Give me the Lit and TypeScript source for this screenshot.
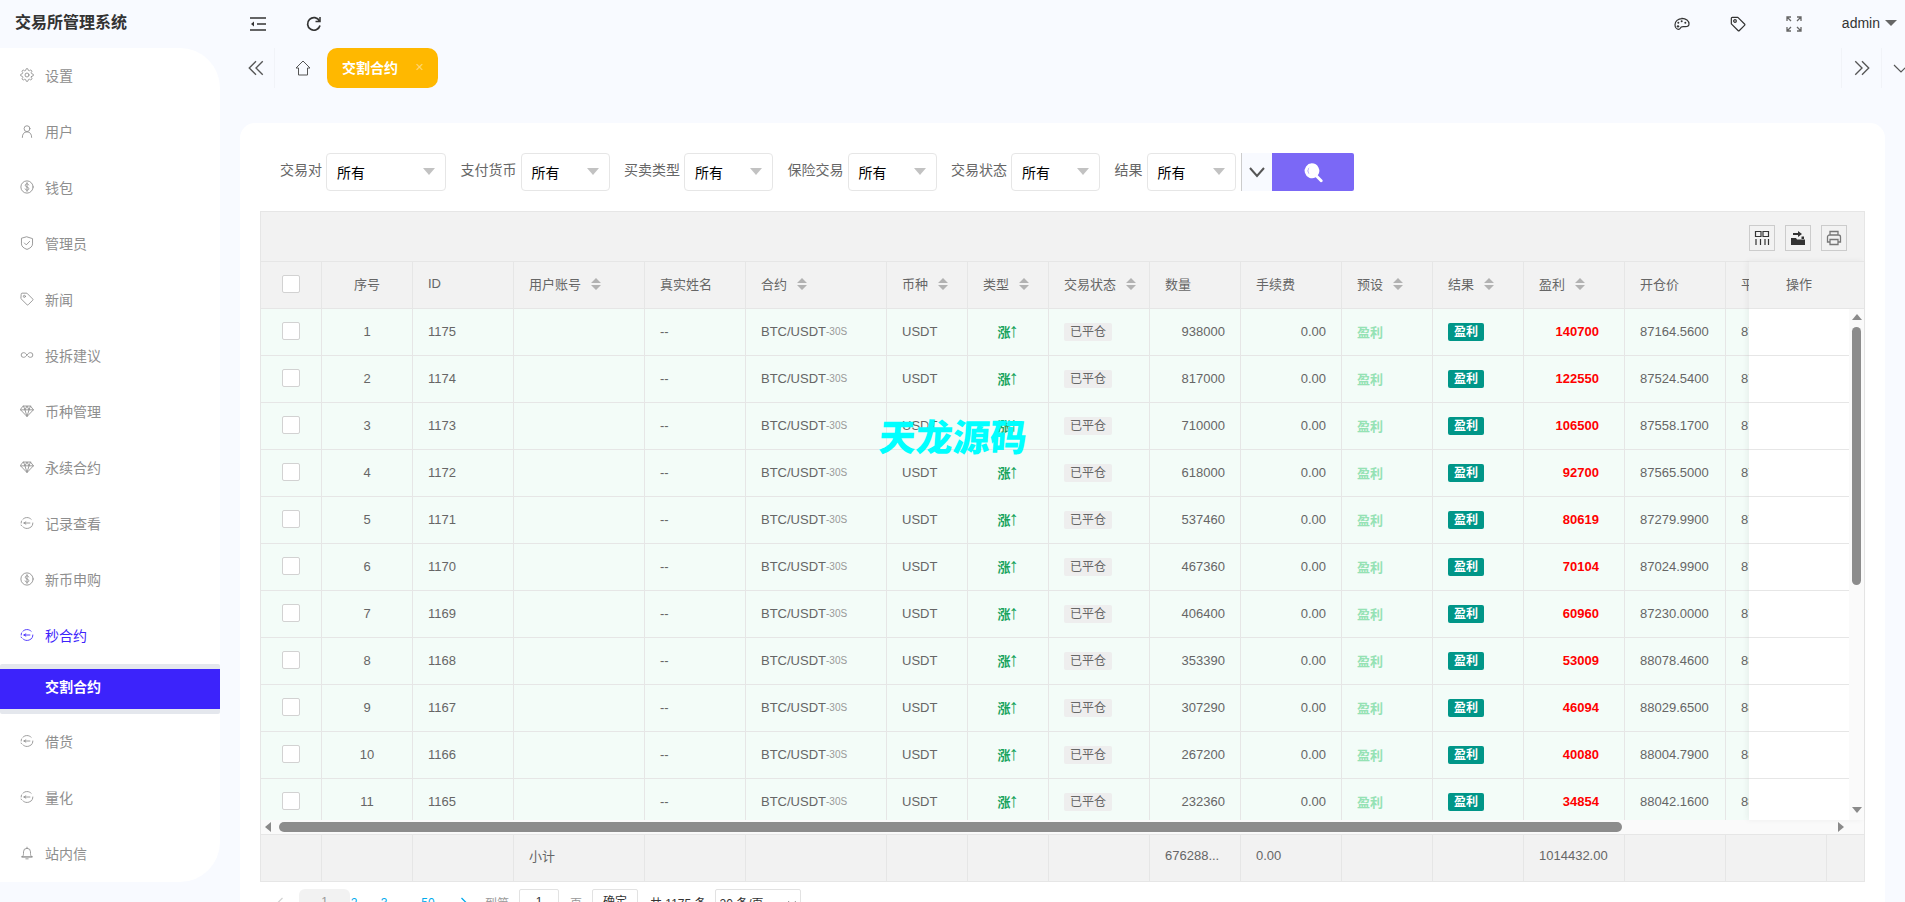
import { LitElement, html, css, svg } from "lit";
import { customElement } from "lit/decorators.js";

const ic = (body: unknown, cls = "ic") =>
  html`<svg class=${cls} viewBox="0 0 24 24" fill="none" stroke="currentColor" stroke-width="1.6" stroke-linecap="round" stroke-linejoin="round">${body}</svg>`;

const gear = svg`<circle cx="12" cy="12" r="3.4"/><path d="M19.4 15a1.65 1.65 0 0 0 .33 1.82l.06.06a2 2 0 0 1 0 2.83 2 2 0 0 1-2.83 0l-.06-.06a1.65 1.65 0 0 0-1.82-.33 1.65 1.65 0 0 0-1 1.51V21a2 2 0 0 1-2 2 2 2 0 0 1-2-2v-.09A1.65 1.65 0 0 0 9 19.4a1.65 1.65 0 0 0-1.82.33l-.06.06a2 2 0 0 1-2.83 0 2 2 0 0 1 0-2.83l.06-.06a1.65 1.65 0 0 0 .33-1.82 1.65 1.65 0 0 0-1.51-1H3a2 2 0 0 1-2-2 2 2 0 0 1 2-2h.09A1.65 1.65 0 0 0 4.6 9a1.65 1.65 0 0 0-.33-1.82l-.06-.06a2 2 0 0 1 0-2.83 2 2 0 0 1 2.83 0l.06.06a1.65 1.65 0 0 0 1.82.33H9a1.65 1.65 0 0 0 1-1.51V3a2 2 0 0 1 2-2 2 2 0 0 1 2 2v.09a1.65 1.65 0 0 0 1 1.51 1.65 1.65 0 0 0 1.82-.33l.06-.06a2 2 0 0 1 2.83 0 2 2 0 0 1 0 2.83l-.06.06a1.65 1.65 0 0 0-.33 1.82V9a1.65 1.65 0 0 0 1.51 1H21a2 2 0 0 1 2 2 2 2 0 0 1-2 2h-.09a1.65 1.65 0 0 0-1.51 1z"/>`;
const user = svg`<circle cx="12" cy="8" r="5"/><path d="M4 23c0-6 3-9.500 8-9.500s8 3.500 8 9.500"/>`;
const dollar = svg`<circle cx="12" cy="12" r="10.500"/><path d="M15 8.500c-.5-1.300-1.600-2-3-2-1.800 0-3 1-3 2.600 0 3.600 6.200 2.200 6.200 5.800 0 1.600-1.300 2.600-3.200 2.600-1.500 0-2.700-.8-3.200-2.200M12 4.500v15"/>`;
const shield = svg`<path d="M12 1.500l9.500 3v9c0 4.500-4 7.500-9.500 9.500-5.500-2-9.500-5-9.500-9.500v-9z"/><path d="M7.500 12l3.200 3.200 5.800-6"/>`;
const tag = svg`<path d="M2 3.500A1.500 1.500 0 0 1 3.500 2h8.300l10 10a1.500 1.500 0 0 1 0 2.100l-7.700 7.700a1.500 1.500 0 0 1-2.100 0L2 11.800z"/><circle cx="7.500" cy="7.500" r="1.800"/>`;
const infinity = svg`<path d="M12 12c-2-2.800-3.800-4-6-4a4 4 0 0 0 0 8c2.200 0 4-1.200 6-4s3.800-4 6-4a4 4 0 0 1 0 8c-1.500 0-3-.5-4-1.500"/>`;
const diamond = svg`<path d="M6 3.500h12l5 6.500-11 11.500L1 10z"/><path d="M1 10h22M8.500 10L12 21.500 15.500 10M6 3.500L8.500 10 12 3.500l3.500 6.500L18 3.500"/>`;
const swap = svg`<path d="M5 5.500a10 10 0 0 1 14 0M22 12a10 10 0 0 1-3 7M19 18.500a10 10 0 0 1-14 0M2 12a10 10 0 0 1 1-4.300M2.500 16.500l-.5-1" stroke-dasharray="3.500 1.500"/><path d="M7 12h10M7 12l3-2M7 12l3 2"/>`;
const bell = svg`<path d="M4 18.500c1.500-1.500 2-3 2-5.500V10a6 6 0 0 1 12 0v3c0 2.500.5 4 2 5.500zM2.500 18.500h19"/><path d="M10 22h4M12 2v2"/>`;

const menu = [
  { t: "设置", i: gear },
  { t: "用户", i: user },
  { t: "钱包", i: dollar },
  { t: "管理员", i: shield },
  { t: "新闻", i: tag },
  { t: "投拆建议", i: infinity },
  { t: "币种管理", i: diamond },
  { t: "永续合约", i: diamond },
  { t: "记录查看", i: swap },
  { t: "新币申购", i: dollar },
  { t: "秒合约", i: swap, active: true, sub: "交割合约" },
  { t: "借货", i: swap },
  { t: "量化", i: swap },
  { t: "站内信", i: bell },
];

const filters = [
  { l: "交易对", wide: true },
  { l: "支付货币" },
  { l: "买卖类型" },
  { l: "保险交易" },
  { l: "交易状态" },
  { l: "结果" },
];

const cols = [
  { t: "", c: "center" },
  { t: "序号", c: "center" },
  { t: "ID" },
  { t: "用户账号", s: 1 },
  { t: "真实姓名" },
  { t: "合约", s: 1 },
  { t: "币种", s: 1 },
  { t: "类型", s: 1 },
  { t: "交易状态", s: 1 },
  { t: "数量" },
  { t: "手续费" },
  { t: "预设", s: 1 },
  { t: "结果", s: 1 },
  { t: "盈利", s: 1 },
  { t: "开仓价" },
  { t: "平仓价" },
  { t: "" },
];

const rows = [
  [1175, 938000, 140700, "87164.5600"],
  [1174, 817000, 122550, "87524.5400"],
  [1173, 710000, 106500, "87558.1700"],
  [1172, 618000, 92700, "87565.5000"],
  [1171, 537460, 80619, "87279.9900"],
  [1170, 467360, 70104, "87024.9900"],
  [1169, 406400, 60960, "87230.0000"],
  [1168, 353390, 53009, "88078.4600"],
  [1167, 307290, 46094, "88029.6500"],
  [1166, 267200, 40080, "88004.7900"],
  [1165, 232360, 34854, "88042.1600"],
];

const sortIcon = html`<svg class="sort" viewBox="0 0 10 12"><path d="M5 0l5 5H0zM5 12L0 7h10z" fill="currentColor"/></svg>`;

@customElement("app-root")
export class AppRoot extends LitElement {
  static styles = css`
    :host {
      display: block;
      height: 902px;
      overflow: hidden;
      background: #f8faff;
      font-family: "Liberation Sans", "Noto Sans CJK SC", sans-serif;
      font-size: 14px;
      color: #666;
      --cols: 61px 91px 101px 131px 101px 141px 81px 81px 101px 91px 101px 91px 91px 101px 101px 101px 120px;
    }
    .app {
      position: relative;
      display: grid;
      grid-template-columns: 220px 1fr;
      grid-template-rows: 48px 1fr;
      height: 902px;
    }
    .top {
      grid-column: 1 / -1;
      display: flex;
      align-items: center;
      padding-right: 8px;
      color: #333;
    }
    .brand {
      width: 205px;
      padding-left: 15px;
      font-size: 16px;
      font-weight: 700;
      margin-top: -7px;
    }
    .top-ic { width: 16px; height: 16px; color: #333; }
    .ham { margin-left: 30px; }
    .refresh { margin-left: 40px; }
    .top-right { margin-left: auto; display: flex; align-items: center; }
    .top-btn { width: 56px; display: flex; justify-content: center; }
    .admin { margin-left: 20px; line-height: 20px; margin-top: -2px; }
    .caret {
      margin: -2px 0 0 5px;
      border: 6px solid transparent;
      border-top-color: #666;
      border-bottom: 0;
    }
    .side {
      align-self: start;
      background: #fff;
      border-radius: 0 40px 40px 0;
      height: 834px;
    }
    .item {
      height: 56px;
      box-sizing: border-box;
      display: flex;
      align-items: center;
      padding: 0 0 2px 20px;
      color: #8e8e8e;
    }
    .item.active { color: #3d22fb; }
    .ic { width: 14px; height: 14px; margin-right: 11px; flex: none; stroke-width: 1.5; }
    .sub {
      background: #e4e7ed;
      padding: 5px 0;
      border-radius: 2px;
    }
    .sub div {
      height: 40px;
      line-height: 36px;
      background: #3c23fb;
      color: #fff;
      font-weight: 700;
      padding-left: 45px;
    }
    .main { display: flex; flex-direction: column; min-width: 0; }
    .tabs { height: 40px; display: flex; flex: none; padding-left: 20px; }
    .tab-btn {
      display: flex;
      align-items: center;
      justify-content: center;
      color: #555;
      border-right: 1px solid #f1f3f8;
    }
    .tab-btn svg { width: 18px; height: 18px; }
    .back { width: 34px; box-sizing: content-box; padding-right: 0; }
    .back svg { margin-right: 3px; }
    .home { width: 48px; padding-left: 4px; border: 0; }
    .home svg { width: 16px; height: 16px; }
    .tab {
      width: 111px;
      display: flex;
      align-items: center;
      justify-content: space-between;
      padding: 0 14px 2px 15px;
      box-sizing: border-box;
      background: #ffb800;
      color: #fff;
      font-weight: 700;
      border-radius: 10px;
    }
    .tab span { font-size: 11px; color: #ffd772; font-weight: 400; }
    .tabs-right { margin-left: auto; display: flex; }
    .tab-btn.next { width: 39px; border-right: 0; border-left: 1px solid #f1f3f8; }
    .tab-btn.more {
      width: 24px;
      border-right: 0;
      border-left: 1px solid #f1f3f8;
      padding-left: 11px;
      box-sizing: border-box;
      overflow: hidden;
      justify-content: flex-start;
    }
    .more svg { flex: none; width: 16px; height: 16px; }
    .card {
      flex: 1;
      margin: 35px 20px 0;
      background: #fff;
      border-radius: 15px 15px 0 0;
      padding: 30px 20px 0;
    }
    .filters { display: flex; align-items: stretch; height: 38px; padding-left: 20px; margin-bottom: 20px; }
    .flabel { margin-right: 4px; line-height: 34px; color: #666; white-space: nowrap; }
    .sel {
      width: 89px;
      box-sizing: border-box;
      margin-right: 14.5px;
      border: 1px solid #e6e6e6;
      border-radius: 4px;
      padding-left: 10px;
      display: flex;
      align-items: center;
      justify-content: space-between;
      color: #000;
    }
    .sel.wide { width: 120px; }
    .sel i {
      margin: -2px 10px 0 0;
      border: 6px solid transparent;
      border-top: 7px solid #c2c2c2;
      border-bottom: 0;
    }
    .fold {
      width: 30px;
      margin-left: -9px;
      background: #f8faff;
      border-left: 1px solid #ccc;
      display: flex;
      align-items: center;
      justify-content: center;
      color: #555;
    }
    .fold svg { width: 20px; height: 20px; }
    .go {
      width: 82px;
      background: #7b68f6;
      border-radius: 0 2px 2px 0;
      display: flex;
      align-items: center;
      justify-content: center;
      color: #fff;
    }
    .go svg { width: 23px; height: 23px; }
    .table {
      position: relative;
      border: 1px solid #e6e6e6;
      border-bottom: 0;
    }
    .toolbar {
      height: 49px;
      box-sizing: border-box;
      background: #f2f2f2;
      display: flex;
      justify-content: flex-end;
      gap: 10px;
      padding: 13px 17px 0 0;
    }
    .tool {
      width: 26px;
      height: 26px;
      box-sizing: border-box;
      border: 1px solid #ccc;
      display: flex;
      align-items: center;
      justify-content: center;
      color: #333;
    }
    .tool svg { width: 16px; height: 16px; }
    .tool.print { color: #777; }
    .row {
      display: grid;
      grid-template-columns: var(--cols);
      width: max-content;
      font-size: 13px;
    }
    .cell {
      height: 47px;
      box-sizing: border-box;
      border-right: 1px solid #e6e6e6;
      border-bottom: 1px solid #e6e6e6;
      padding: 0 15px 2px;
      display: flex;
      align-items: center;
      overflow: hidden;
      white-space: nowrap;
    }
    .cell.center { justify-content: center; padding: 0 0 2px; }
    .cell.right { justify-content: flex-end; }
    .head-wrap { border-top: 1px solid #e6e6e6; overflow: hidden; background: #f2f2f2; }
    .head .cell { background: #f2f2f2; padding-bottom: 4px; }
    .sort { width: 10px; height: 12px; margin: 2px 0 0 10px; color: #b2b2b2; flex: none; }
    .cb {
      width: 18px;
      height: 18px;
      box-sizing: border-box;
      background: #fff;
      border: 1px solid #d2d2d2;
      border-radius: 2px;
    }
    .head .cb { margin-top: 2px; }
    .body { display: flex; height: 511px; }
    .clip { flex: 1; overflow: hidden; min-width: 0; }
    .body .cell { background: #f3fcf8; }
    .pair small { font-size: 10px; color: #999; }
    .up { color: #16a35c; font-weight: 700; }
    .up b { font-size: 20px; line-height: 13px; font-weight: 400; margin-left: -2px; }
    .closed {
      height: 18px;
      line-height: 18px;
      margin-top: 2px;
      padding: 0 6px;
      border-radius: 2px;
      background: #eee;
      color: #666;
      font-size: 12px;
    }
    .preset { color: #95e2b4; font-weight: 700; }
    .win {
      height: 18px;
      line-height: 18px;
      margin-top: 2px;
      padding: 0 6px;
      border-radius: 2px;
      background: #009688;
      color: #fff;
      font-size: 12px;
      font-weight: 700;
    }
    .cell.profit { justify-content: flex-end; padding-right: 25px; color: #f00; font-weight: 700; }
    .vbar {
      width: 15px;
      flex: none;
      background: #fafafa;
      display: flex;
      flex-direction: column;
      align-items: center;
      padding: 5px 0 7px;
      box-sizing: border-box;
    }
    .tri-up { border: 5px solid transparent; border-top: 0; border-bottom: 6px solid #8a8a8a; margin-bottom: 7px; }
    .tri-down { border: 5px solid transparent; border-bottom: 0; border-top: 6px solid #8a8a8a; margin-top: auto; }
    .vthumb { width: 9px; height: 258px; background: #8c8c8c; border-radius: 5px; }
    .hbar {
      height: 14px;
      background: #fafafa;
      display: flex;
      align-items: center;
      padding: 0 20px 0 4px;
    }
    .tri-left { border: 5px solid transparent; border-left: 0; border-right: 6px solid #8a8a8a; margin-right: 8px; }
    .tri-right { border: 5px solid transparent; border-right: 0; border-left: 6px solid #8a8a8a; margin-left: auto; }
    .hthumb { width: 1343px; height: 10px; background: #8c8c8c; border-radius: 5px; }
    .foot-wrap { overflow: hidden; border-top: 1px solid #e6e6e6; border-bottom: 1px solid #e6e6e6; background: #f2f2f2; }
    .foot .cell { background: #f2f2f2; height: 46px; border-bottom: 0; padding-bottom: 6px; }
    .fixed {
      position: absolute;
      top: 49px;
      right: 0;
      width: 115px;
      height: 559px;
      overflow: hidden;
      box-shadow: -2px 0 6px rgba(0, 0, 0, 0.05);
    }
    .fixed-head {
      height: 48px;
      box-sizing: border-box;
      border-top: 1px solid #e6e6e6;
      border-bottom: 1px solid #e6e6e6;
      background: #f2f2f2;
      padding: 0 15px 4px 0;
      display: flex;
      align-items: center;
      justify-content: center;
      font-size: 13px;
    }
    .fixed-row {
      width: 100px;
      height: 47px;
      box-sizing: border-box;
      background: #fff;
      border-bottom: 1px solid #e6e6e6;
    }
    .pager {
      display: flex;
      align-items: center;
      height: 30px;
      margin-top: 7px;
      font-size: 12px;
      color: #999;
      white-space: nowrap;
    }
    .pg-prev { width: 39px; display: flex; justify-content: center; color: #d2d2d2; }
    .pg-prev svg, .pg-next svg { width: 14px; height: 14px; }
    .pg-cur {
      width: 51px;
      height: 30px;
      line-height: 27px;
      text-align: center;
      background: #f2f2f2;
      border-radius: 6px 6px 0 0;
    }
    .pg { color: #01aaed; text-align: center; margin-bottom: 3px; }
    .pg2 { width: 8px; }
    .pg3 { width: 8px; margin-left: 22px; }
    .pgd { width: 16px; margin-left: 8px; }
    .pg50 { width: 16px; margin-left: 8px; }
    .pg-next { width: 16px; margin-left: 20px; display: flex; justify-content: center; color: #01aaed; }
    .pg-to { margin: 0 0 3px 13px; }
    .pg-input {
      width: 40px;
      height: 30px;
      line-height: 25px;
      margin-left: 10px;
      box-sizing: border-box;
      border: 1px solid #e2e2e2;
      border-radius: 2px;
      text-align: center;
      color: #333;
    }
    .pg-unit { margin: 0 0 3px 11px; }
    .pg-btn {
      width: 46px;
      height: 30px;
      line-height: 25px;
      margin-left: 10px;
      box-sizing: border-box;
      border: 1px solid #e2e2e2;
      border-radius: 2px;
      text-align: center;
      color: #333;
    }
    .pg-total { margin: 0 0 3px 12px; color: #333; }
    .pg-size {
      width: 86px;
      height: 30px;
      margin-left: 8px;
      box-sizing: border-box;
      border: 1px solid #e2e2e2;
      border-radius: 2px;
      background: #fff;
      color: #333;
      font: inherit;
    }
    .mark {
      position: absolute;
      left: 879px;
      top: 417px;
      font-family: "Noto Sans CJK SC", sans-serif;
      font-size: 37px;
      line-height: 37px;
      font-weight: 900;
      color: #00ffff;
      transform: skewX(-4deg);
      white-space: nowrap;
    }
  `;

  renderRow(r: (number | string)[], n: number) {
    return html`<div class="row">
      <div class="cell center"><span class="cb"></span></div>
      <div class="cell center">${n + 1}</div>
      <div class="cell">${r[0]}</div>
      <div class="cell"></div>
      <div class="cell">--</div>
      <div class="cell pair">BTC/USDT<small>-30S</small></div>
      <div class="cell">USDT</div>
      <div class="cell center"><span class="up">涨<b>↑</b></span></div>
      <div class="cell"><span class="closed">已平仓</span></div>
      <div class="cell right">${r[1]}</div>
      <div class="cell right">0.00</div>
      <div class="cell preset">盈利</div>
      <div class="cell"><span class="win">盈利</span></div>
      <div class="cell profit">${r[2]}</div>
      <div class="cell">${r[3]}</div>
      <div class="cell">${r[3]}</div>
      <div class="cell"></div>
    </div>`;
  }

  render() {
    return html`<div class="app">
      <header class="top">
        <div class="brand">交易所管理系统</div>
        <svg class="top-ic ham" viewBox="0 0 16 16" fill="none" stroke="currentColor" stroke-width="1.500"><path d="M0 2h16M7 8h9M0 14h16"/><path d="M4 5.500L1 8l3 2.500z" fill="currentColor" stroke="none"/></svg>
        <svg class="top-ic refresh" viewBox="0 0 16 16" fill="none" stroke="currentColor" stroke-width="1.700"><path d="M13.500 5A6.300 6.300 0 1 0 14 9.500"/><path d="M14 1v4.500H9.500" stroke-width="1.500"/></svg>
        <div class="top-right">
          <div class="top-btn">
            <svg class="top-ic" viewBox="0 0 24 24" fill="none" stroke="currentColor" stroke-width="1.800"><path d="M12 4C6 4 1.500 8 1.500 13c0 4 2.500 7 5.500 7 2.500 0 2.500-2.500 4-3.500s3-.5 6-.5 5.500-1.500 5.500-4c0-4.500-4.500-8.500-10.500-8.500z"/><g fill="currentColor" stroke="none"><circle cx="6" cy="15.500" r="1.800"/><circle cx="6.500" cy="10" r="1.500"/><circle cx="11.500" cy="8" r="1.500"/><circle cx="17" cy="10" r="1.500"/></g></svg>
          </div>
          <div class="top-btn">
            <svg class="top-ic" viewBox="0 0 24 24" fill="none" stroke="currentColor" stroke-width="1.800" stroke-linejoin="round"><path d="M2 3.500A1.500 1.500 0 0 1 3.500 2h8.300l10 10a1.500 1.500 0 0 1 0 2.100l-7.700 7.700a1.500 1.500 0 0 1-2.100 0L2 11.800z"/><circle cx="7.500" cy="7.500" r="2"/></svg>
          </div>
          <div class="top-btn">
            <svg class="top-ic" viewBox="0 0 16 16" fill="none" stroke="#666" stroke-width="1.300"><path d="M1 5V1h4M1 1l4 4M15 5V1h-4M15 1l-4 4M1 11v4h4M1 15l4-4M15 11v4h-4M15 15l-4-4"/></svg>
          </div>
          <span class="admin">admin</span><i class="caret"></i>
        </div>
      </header>

      <nav class="side">
        ${menu.map(
          (m) => html`<div class="item ${m.active ? "active" : ""}">${ic(m.i)}<span>${m.t}</span></div>
            ${m.sub ? html`<div class="sub"><div>${m.sub}</div></div>` : ""}`
        )}
      </nav>

      <main class="main">
        <div class="tabs">
          <div class="tab-btn back"><svg viewBox="0 0 16 16" fill="none" stroke="currentColor" stroke-width="1.200"><path d="M8 2L2 8l6 6M14 2L8 8l6 6"/></svg></div>
          <div class="tab-btn home"><svg viewBox="0 0 16 16" fill="none" stroke="currentColor" stroke-width="1"><path d="M8 1L1 8h2.500v7h9V8H15z" stroke-linejoin="round"/></svg></div>
          <div class="tab">交割合约<span>✕</span></div>
          <div class="tabs-right">
            <div class="tab-btn next"><svg viewBox="0 0 16 16" fill="none" stroke="currentColor" stroke-width="1.200"><path d="M2 2l6 6-6 6M8 2l6 6-6 6"/></svg></div>
            <div class="tab-btn more"><svg viewBox="0 0 16 16" fill="none" stroke="currentColor" stroke-width="1.200"><path d="M1 5l7 7 7-7"/></svg></div>
          </div>
        </div>

        <section class="card">
          <div class="filters">
            ${filters.map(
              (f) => html`<span class="flabel">${f.l}</span>
                <div class="sel ${f.wide ? "wide" : ""}">所有<i></i></div>`
            )}
            <div class="fold"><svg viewBox="0 0 20 20" fill="none" stroke="currentColor" stroke-width="2"><path d="M3 6l7 8 7-8"/></svg></div>
            <div class="go"><svg viewBox="0 0 20 20"><path fill-rule="evenodd" fill="currentColor" d="M8.500 2a6.500 6.500 0 0 1 5.200 10.400l4.100 4.100a1.300 1.300 0 0 1-1.800 1.800l-4.100-4.100A6.500 6.500 0 1 1 8.500 2zm0 3a3.500 3.500 0 0 0-2 6.400 5 5 0 0 1 0-6z"/></svg></div>
          </div>

          <div class="table">
            <div class="toolbar">
              <div class="tool"><svg viewBox="0 0 16 16" fill="none" stroke="currentColor" stroke-width="1.200"><path d="M1.500 1.500h5.500v5H1.500zM9 1.500h5.500v5H9zM2 9v6M6.500 9v6M11 9v6M14.500 9v6"/></svg></div>
              <div class="tool"><svg viewBox="0 0 16 16" fill="currentColor"><path d="M1 8h5l1 1.500h8V15H1z"/><path d="M3 7V5h5V3l4 3-4 3V7z" transform="translate(0 -2)"/><path d="M11.500 6.500H14V9h-2.500z"/></svg></div>
              <div class="tool print"><svg viewBox="0 0 16 16" fill="none" stroke="currentColor" stroke-width="1.300"><path d="M4 5V1.500h8V5M4 12H1.500V7A2 2 0 0 1 3.500 5h9a2 2 0 0 1 2 2v5H12"/><path d="M4 9.500h8v5H4z"/></svg></div>
            </div>
            <div class="head-wrap">
              <div class="row head">
                ${cols.map(
                  (c, i) => html`<div class="cell ${c.c ?? ""}">
                    ${i === 0 ? html`<span class="cb"></span>` : c.t}${c.s ? sortIcon : ""}
                  </div>`
                )}
              </div>
            </div>
            <div class="body">
              <div class="clip">${rows.map((r, i) => this.renderRow(r, i))}</div>
              <div class="vbar"><i class="tri-up"></i><div class="vthumb"></div><i class="tri-down"></i></div>
            </div>
            <div class="hbar"><i class="tri-left"></i><div class="hthumb"></div><i class="tri-right"></i></div>
            <div class="foot-wrap">
              <div class="row foot">
                ${cols.map((_, i) => html`<div class="cell">
                  ${i === 3 ? "小计" : i === 9 ? "676288..." : i === 10 ? "0.00" : i === 13 ? "1014432.00" : ""}
                </div>`)}
              </div>
            </div>
            <div class="fixed">
              <div class="fixed-head">操作</div>
              ${rows.map(() => html`<div class="fixed-row"></div>`)}
            </div>
          </div>

          <div class="pager">
            <span class="pg-prev"><svg viewBox="0 0 14 14" fill="none" stroke="currentColor" stroke-width="1.300"><path d="M9.500 1L3.500 7l6 6"/></svg></span>
            <span class="pg-cur">1</span>
            <span class="pg pg2">2</span>
            <span class="pg pg3">3</span>
            <span class="pg pgd">…</span>
            <span class="pg pg50">50</span>
            <span class="pg-next"><svg viewBox="0 0 14 14" fill="none" stroke="currentColor" stroke-width="1.300"><path d="M4.500 1l6 6-6 6"/></svg></span>
            <span class="pg-to">到第</span>
            <span class="pg-input">1</span>
            <span class="pg-unit">页</span>
            <span class="pg-btn">确定</span>
            <span class="pg-total">共 1175 条</span>
            <select class="pg-size"><option>20 条/页</option></select>
          </div>
        </section>
      </main>

      <div class="mark">天龙源码</div>
    </div>`;
  }
}
